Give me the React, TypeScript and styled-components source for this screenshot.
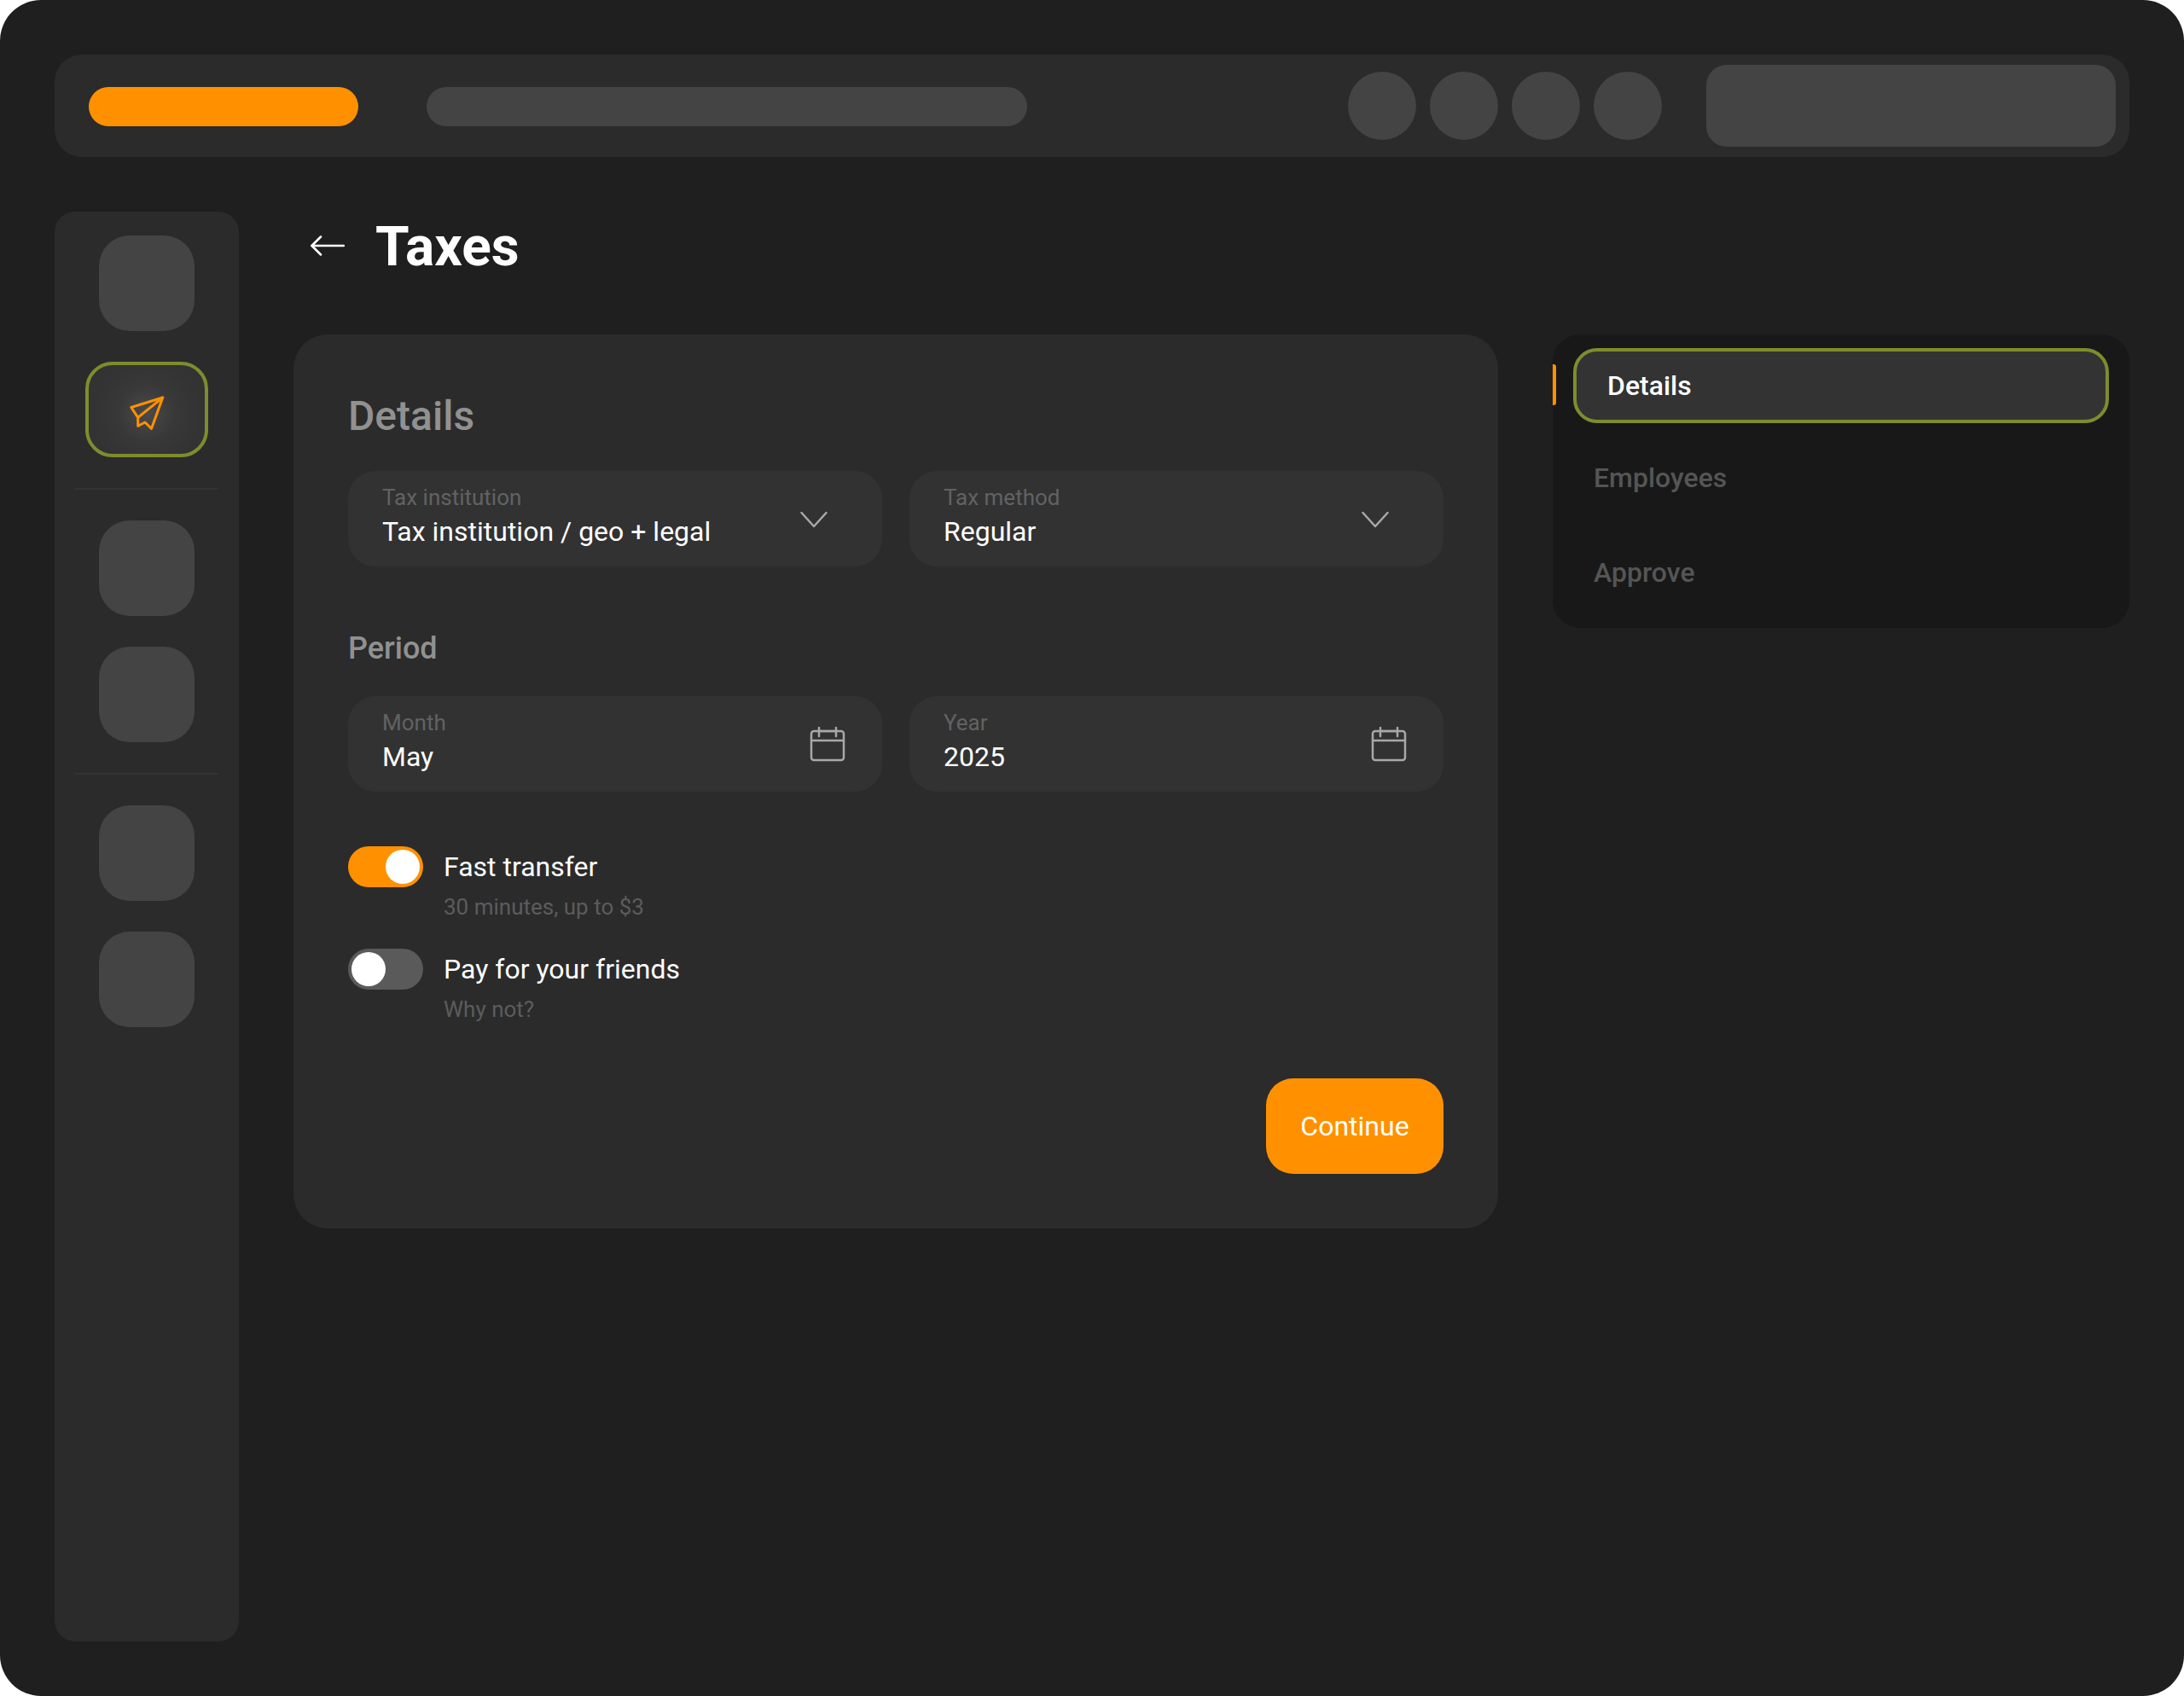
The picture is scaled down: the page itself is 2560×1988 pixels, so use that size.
import styled, { createGlobalStyle } from "styled-components";

const GlobalStyle = createGlobalStyle`
  html, body {
    margin: 0;
    background: #fff;
  }
  * {
    box-sizing: border-box;
  }
`;

const Page = styled.div`
  width: 2560px;
  height: 1988px;
  padding: 64px;
  border-radius: 48px;
  background: #1f1f1f;
  font-family: Roboto, "Liberation Sans", sans-serif;
`;

const TopBar = styled.header`
  display: flex;
  align-items: center;
  height: 120px;
  padding: 0 16px 0 40px;
  border-radius: 32px;
  background: #2b2b2b;
`;

const Logo = styled.div`
  width: 316px;
  height: 46px;
  margin-top: 2px;
  border-radius: 23px;
  background: #ff9100;
`;

const SearchPill = styled.div`
  width: 704px;
  height: 46px;
  margin-top: 2px;
  margin-left: 80px;
  border-radius: 23px;
  background: #444;
`;

const Circles = styled.div`
  display: flex;
  gap: 16px;
  margin-left: auto;
`;

const Circle = styled.div`
  width: 80px;
  height: 80px;
  border-radius: 50%;
  background: #444;
`;

const UserBlock = styled.div`
  width: 480px;
  height: 96px;
  margin-left: 52px;
  border-radius: 24px;
  background: #444;
`;

const Body = styled.div`
  display: flex;
  gap: 64px;
  height: 1676px;
  margin-top: 64px;
`;

const Sidebar = styled.nav`
  display: flex;
  flex-direction: column;
  align-items: center;
  gap: 36px;
  width: 216px;
  padding-top: 28px;
  border-radius: 24px;
  background: #2b2b2b;
`;

const Tile = styled.div`
  width: 112px;
  height: 112px;
  border-radius: 36px;
  background: #444;
`;

const ActiveTile = styled.div`
  display: flex;
  align-items: center;
  justify-content: center;
  width: 144px;
  height: 112px;
  border: 4px solid #7f8c2d;
  border-radius: 32px;
  background: radial-gradient(circle at 50% 54%, #4a4a4a 0%, #383838 38%, #333 70%);
`;

const SideDivider = styled.div`
  width: 168px;
  height: 2px;
  background: #333;
`;

const Main = styled.main`
  flex: 1;
`;

const TitleRow = styled.div`
  display: flex;
  align-items: center;
  gap: 36px;
  height: 80px;
  margin-bottom: 64px;
  padding-left: 20px;
`;

const Title = styled.h1`
  margin: 0;
  padding-top: 3px;
  color: #fff;
  font-size: 64px;
  font-weight: 700;
  line-height: 80px;
`;

const Columns = styled.div`
  display: flex;
  align-items: flex-start;
  gap: 64px;
`;

const Card = styled.section`
  width: 1412px;
  padding: 64px;
  border-radius: 40px;
  background: #2b2b2b;
`;

const CardHeading = styled.h2`
  margin: 0 0 32px;
  color: #919191;
  font-size: 48px;
  font-weight: 500;
  line-height: 64px;
`;

const SectionLabel = styled.h3`
  margin: 74px 0 34px;
  color: #919191;
  font-size: 36px;
  font-weight: 500;
  line-height: 44px;
`;

const FieldRow = styled.div`
  display: grid;
  grid-template-columns: 1fr 1fr;
  gap: 32px;
`;

const Field = styled.div`
  display: flex;
  align-items: center;
  justify-content: space-between;
  height: 112px;
  padding: 0 40px;
  border-radius: 32px;
  background: #323232;
`;

const FieldText = styled.div`
  display: flex;
  flex-direction: column;
  gap: 5px;
  align-self: flex-start;
  padding-top: 16px;
`;

const FieldLabel = styled.span`
  color: #626262;
  font-size: 26px;
  line-height: 30px;
`;

const FieldValue = styled.span`
  color: #fff;
  font-size: 32px;
  line-height: 40px;
`;

const ChevronIcon = styled.svg`
  margin-right: 16px;
  fill: none;
  stroke: #a8a8a8;
  stroke-width: 2.5;
  stroke-linecap: round;
  stroke-linejoin: round;
`;

const CalendarIcon = styled.svg`
  fill: none;
  stroke: #a8a8a8;
  stroke-width: 2.5;
  stroke-linecap: round;
  stroke-linejoin: round;
`;

const ToggleList = styled.div`
  display: flex;
  flex-direction: column;
  gap: 33px;
  margin-top: 64px;
`;

const ToggleRow = styled.div`
  display: flex;
  gap: 24px;
`;

const Switch = styled.div<{ $on?: boolean }>`
  display: flex;
  justify-content: ${(p) => (p.$on ? "flex-end" : "flex-start")};
  width: 88px;
  height: 48px;
  padding: 4px;
  border-radius: 24px;
  background: ${(p) => (p.$on ? "#ff9100" : "#5a5a5a")};
`;

const Knob = styled.div`
  width: 40px;
  height: 40px;
  border-radius: 50%;
  background: #fff;
`;

const ToggleText = styled.div`
  display: flex;
  flex-direction: column;
  gap: 7px;
`;

const ToggleTitle = styled.span`
  color: #fff;
  font-size: 32px;
  line-height: 48px;
`;

const ToggleHint = styled.span`
  color: #5c5c5c;
  font-size: 26px;
  line-height: 32px;
`;

const Actions = styled.div`
  display: flex;
  justify-content: flex-end;
  margin-top: 65px;
`;

const ContinueButton = styled.button`
  width: 208px;
  height: 112px;
  padding: 0;
  border: 0;
  border-radius: 32px;
  background: #ff9100;
  color: #fff;
  font-family: inherit;
  font-size: 32px;
`;

const Steps = styled.aside`
  position: relative;
  display: flex;
  flex-direction: column;
  gap: 23px;
  width: 676px;
  padding: 16px 24px 18px;
  border-radius: 32px;
  background: #181818;
`;

const StepMarker = styled.div`
  position: absolute;
  top: 35px;
  left: 0;
  width: 4px;
  height: 48px;
  border-radius: 0 3px 3px 0;
  background: #ff9100;
`;

const Step = styled.div<{ $active?: boolean }>`
  display: flex;
  align-items: center;
  height: 88px;
  padding: ${(p) => (p.$active ? "0 0 0 36px" : "0 0 6px 24px")};
  border: ${(p) => (p.$active ? "4px solid #7f8c2d" : "0")};
  border-radius: 28px;
  background: ${(p) => (p.$active ? "#333" : "transparent")};
  color: ${(p) => (p.$active ? "#fff" : "#555")};
  font-size: 32px;
  font-weight: 500;
`;

function PlaneGlyph() {
  return (
    <svg
      width="48"
      height="48"
      viewBox="0 0 48 48"
      fill="none"
      stroke="#ff9100"
      strokeWidth="3"
      strokeLinecap="round"
      strokeLinejoin="round"
    >
      <path d="M42.7 10 L5.8 21.5 L13.7 33.3 L13.7 43.3 L22 39 L29.5 46.5 Z" />
      <path d="M42.7 10 L13.7 33.3" />
    </svg>
  );
}

function BackArrow() {
  return (
    <svg
      width="40"
      height="24"
      viewBox="0 0 40 24"
      fill="none"
      stroke="#fff"
      strokeWidth="2.5"
      strokeLinecap="round"
      strokeLinejoin="round"
    >
      <path d="M1.5 12 H39" />
      <path d="M12 1.5 L1.5 12 L12 22.5" />
    </svg>
  );
}

function Chevron() {
  return (
    <ChevronIcon width="48" height="48" viewBox="0 0 48 48">
      <path d="M9.5 17 L24 33 L38.5 17" />
    </ChevronIcon>
  );
}

function Calendar() {
  return (
    <CalendarIcon width="48" height="48" viewBox="0 0 48 48">
      <rect x="5" y="9" width="38" height="34" rx="3" />
      <path d="M5 20 H43" />
      <path d="M14 5 V15 M34 5 V15 M14 9 H34" />
    </CalendarIcon>
  );
}

export default function App() {
  return (
    <>
      <GlobalStyle />
      <Page>
        <TopBar>
          <Logo />
          <SearchPill />
          <Circles>
            <Circle />
            <Circle />
            <Circle />
            <Circle />
          </Circles>
          <UserBlock />
        </TopBar>
        <Body>
          <Sidebar>
            <Tile />
            <ActiveTile>
              <PlaneGlyph />
            </ActiveTile>
            <SideDivider />
            <Tile />
            <Tile />
            <SideDivider />
            <Tile />
            <Tile />
          </Sidebar>
          <Main>
            <TitleRow>
              <BackArrow />
              <Title>Taxes</Title>
            </TitleRow>
            <Columns>
              <Card>
                <CardHeading>Details</CardHeading>
                <FieldRow>
                  <Field>
                    <FieldText>
                      <FieldLabel>Tax institution</FieldLabel>
                      <FieldValue>Tax institution / geo + legal</FieldValue>
                    </FieldText>
                    <Chevron />
                  </Field>
                  <Field>
                    <FieldText>
                      <FieldLabel>Tax method</FieldLabel>
                      <FieldValue>Regular</FieldValue>
                    </FieldText>
                    <Chevron />
                  </Field>
                </FieldRow>
                <SectionLabel>Period</SectionLabel>
                <FieldRow>
                  <Field>
                    <FieldText>
                      <FieldLabel>Month</FieldLabel>
                      <FieldValue>May</FieldValue>
                    </FieldText>
                    <Calendar />
                  </Field>
                  <Field>
                    <FieldText>
                      <FieldLabel>Year</FieldLabel>
                      <FieldValue>2025</FieldValue>
                    </FieldText>
                    <Calendar />
                  </Field>
                </FieldRow>
                <ToggleList>
                  <ToggleRow>
                    <Switch $on>
                      <Knob />
                    </Switch>
                    <ToggleText>
                      <ToggleTitle>Fast transfer</ToggleTitle>
                      <ToggleHint>30 minutes, up to $3</ToggleHint>
                    </ToggleText>
                  </ToggleRow>
                  <ToggleRow>
                    <Switch>
                      <Knob />
                    </Switch>
                    <ToggleText>
                      <ToggleTitle>Pay for your friends</ToggleTitle>
                      <ToggleHint>Why not?</ToggleHint>
                    </ToggleText>
                  </ToggleRow>
                </ToggleList>
                <Actions>
                  <ContinueButton>Continue</ContinueButton>
                </Actions>
              </Card>
              <Steps>
                <StepMarker />
                <Step $active>Details</Step>
                <Step>Employees</Step>
                <Step>Approve</Step>
              </Steps>
            </Columns>
          </Main>
        </Body>
      </Page>
    </>
  );
}
